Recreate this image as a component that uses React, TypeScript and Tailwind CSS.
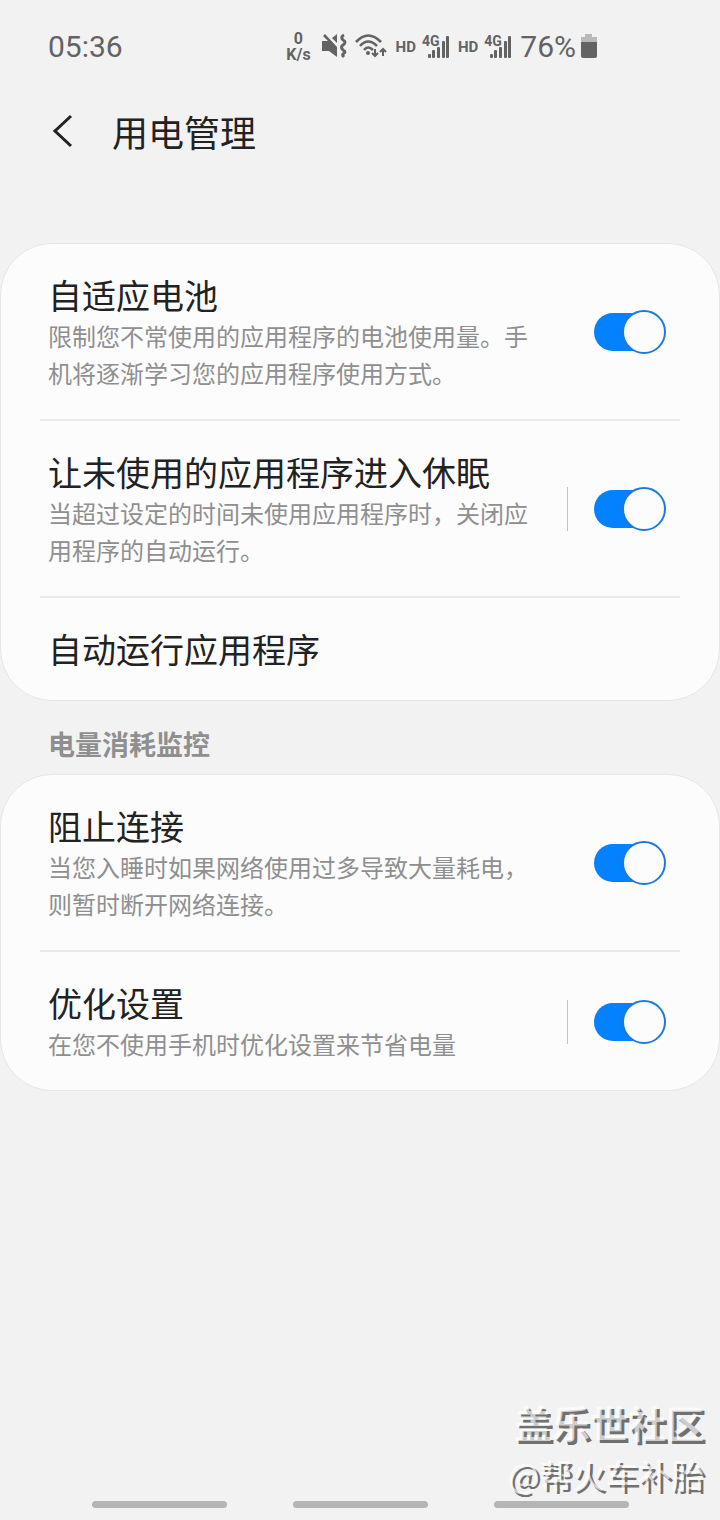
import React, { useState } from 'react';

type SettingRowProps = {
  id: string;
  title: string;
  description: string;
  divided?: boolean;
};

function Toggle({ id, label }: { id: string; label: string }) {
  const [checked, setChecked] = useState(true);

  return (
    <label htmlFor={id} className="relative flex h-11 w-[72px] shrink-0 cursor-pointer items-center">
      <input
        id={id}
        type="checkbox"
        role="switch"
        aria-label={label}
        checked={checked}
        onChange={(e) => setChecked(e.target.checked)}
        className="peer sr-only"
      />
      <span className="h-[38px] w-[68px] rounded-full bg-[#a0a0a0] peer-checked:bg-[#0381fe]" />
      <span className="absolute top-0 left-0 size-11 rounded-full border-2 border-[#a0a0a0] bg-[#fcfcfc] peer-checked:right-0 peer-checked:left-auto peer-checked:border-[#1a7bdc]" />
    </label>
  );
}

function SettingRow({ id, title, description, divided }: SettingRowProps) {
  return (
    <li className="flex items-center pt-[29px] pr-[14px] pb-7 pl-2">
      <div className="min-w-0 flex-1 pr-6">
        <h2 className="text-[34px] leading-[44px] text-[#222]">{title}</h2>
        <p className="text-2xl leading-[37px] text-[#8f8f8f]">{description}</p>
      </div>
      <span className={divided ? 'h-11 w-px bg-[#c4c4c4]' : 'h-11 w-px'} />
      <div className="pl-[26px]">
        <Toggle id={id} label={title} />
      </div>
    </li>
  );
}

function Signal() {
  return (
    <div className="flex items-center gap-[6px] font-bold">
      <span className="text-[15px] leading-5">HD</span>
      <div className="relative">
        <svg width="28" height="28" viewBox="0 0 28 28" fill="currentColor">
          <rect x="6" y="21" width="3" height="4" rx="1" />
          <rect x="10" y="17" width="3" height="8" rx="1" />
          <rect x="15" y="14" width="3" height="11" rx="1" />
          <rect x="20" y="8" width="3" height="17" rx="1" />
          <rect x="24" y="3" width="3" height="22" rx="1" />
        </svg>
        <span className="absolute top-0 left-0 text-sm leading-4">4G</span>
      </div>
    </div>
  );
}

function StatusBar() {
  return (
    <header className="flex h-[94px] items-center justify-between pr-[122px] pl-12 font-[Roboto,sans-serif] text-[#636363]">
      <time className="text-[30px] leading-9">05:36</time>
      <div className="flex items-center">
        <div className="text-center text-base leading-4 font-bold">
          <p>0</p>
          <p>K/s</p>
        </div>
        {/* muted, vibrate */}
        <svg className="ml-[10px]" width="28" height="28" viewBox="0 0 28 28" fill="currentColor">
          <path d="M2 3l2-2 12 13v10l-8-6H1V8h6z" />
          <path d="M11 5l5-4v9z" />
          <path
            d="M23 2q-4 2-1 5 4 2 0 5-3 2 0 5 4 2 0 4-1 1 1 3"
            fill="none"
            stroke="currentColor"
            strokeWidth="3"
          />
        </svg>
        <svg className="ml-[6px]" width="34" height="28" viewBox="0 0 34 28" fill="none" stroke="currentColor" strokeWidth="3">
          <path d="M1 9q12-13 25 0M5 13q8-9 17 0M9 17q4-5 9 0" strokeWidth="2.600" />
          <circle cx="13" cy="20" r="2" fill="currentColor" stroke="none" />
          <path d="M20 16v7M17 20l3 3 3-3M28 23v-7M25 19l3-3 3 3" strokeWidth="2" />
        </svg>
        <div className="ml-[7px] flex gap-2">
          <Signal />
          <Signal />
        </div>
        <span className="ml-2 text-[30px] leading-9">76%</span>
        <svg className="ml-1" width="18" height="28" viewBox="0 0 18 28" fill="currentColor">
          <path d="M5 1h7v3h5v5H1V4h4z" opacity="0.4" />
          <path d="M1 9h16v14q0 2-2 2H3q-2 0-2-2z" />
        </svg>
      </div>
    </header>
  );
}

function App() {
  return (
    <div className="relative flex min-h-screen flex-col bg-[#f2f2f2] font-['Noto_Sans_CJK_SC',sans-serif]">
      <StatusBar />

      <div className="flex h-[149px] items-start pt-[9px] pl-12">
        <button type="button" aria-label="返回" className="flex h-14 w-16 items-center text-[#222]">
          <svg width="28" height="36" viewBox="0 0 28 36" fill="none" stroke="currentColor" strokeWidth="3">
            <path d="M23 3L7 18l16 15" />
          </svg>
        </button>
        <h1 className="text-4xl leading-[56px] text-[#222]">用电管理</h1>
      </div>

      <main>
        <ul className="divide-y-2 divide-[#e9e9e9] rounded-[52px] border border-[#e6e6e6] bg-[#fcfcfc] px-[39px]">
          <SettingRow id="adaptive" title="自适应电池" description="限制您不常使用的应用程序的电池使用量。手机将逐渐学习您的应用程序使用方式。" />
          <SettingRow id="sleep" title="让未使用的应用程序进入休眠" description="当超过设定的时间未使用应用程序时，关闭应用程序的自动运行。" divided />
          <li>
            <a href="#auto-run" className="block py-[29px] pl-2 text-[34px] leading-[44px] text-[#222]">自动运行应用程序</a>
          </li>
        </ul>

        <h2 className="pt-[23px] pb-[10px] pl-12 text-[27px] leading-10 font-bold text-[#8f8f8f]">电量消耗监控</h2>

        <ul className="divide-y-2 divide-[#e9e9e9] rounded-[52px] border border-[#e6e6e6] bg-[#fcfcfc] px-[39px]">
          <SettingRow id="block" title="阻止连接" description="当您入睡时如果网络使用过多导致大量耗电，则暂时断开网络连接。" />
          <SettingRow id="optimize" title="优化设置" description="在您不使用手机时优化设置来节省电量" divided />
        </ul>
      </main>

      <nav className="mt-auto flex justify-center gap-[66px] pb-3">
        <button type="button" aria-label="最近" className="h-[7px] w-[135px] rounded-full bg-[#b5b5b5]" />
        <button type="button" aria-label="主页" className="h-[7px] w-[135px] rounded-full bg-[#b5b5b5]" />
        <button type="button" aria-label="返回" className="h-[7px] w-[135px] rounded-full bg-[#b5b5b5]" />
      </nav>

      {/* Watermark */}
      <div className="absolute right-4 bottom-5 text-right text-white/65">
        <p className="text-[38px] leading-[52px] font-bold text-shadow-[3px_3px_0_#707070]">盖乐世社区</p>
        <p className="text-[33px] leading-[52px] text-shadow-[3px_3px_0_#707070]">@帮火车补胎</p>
      </div>
    </div>
  );
}

export default App;
